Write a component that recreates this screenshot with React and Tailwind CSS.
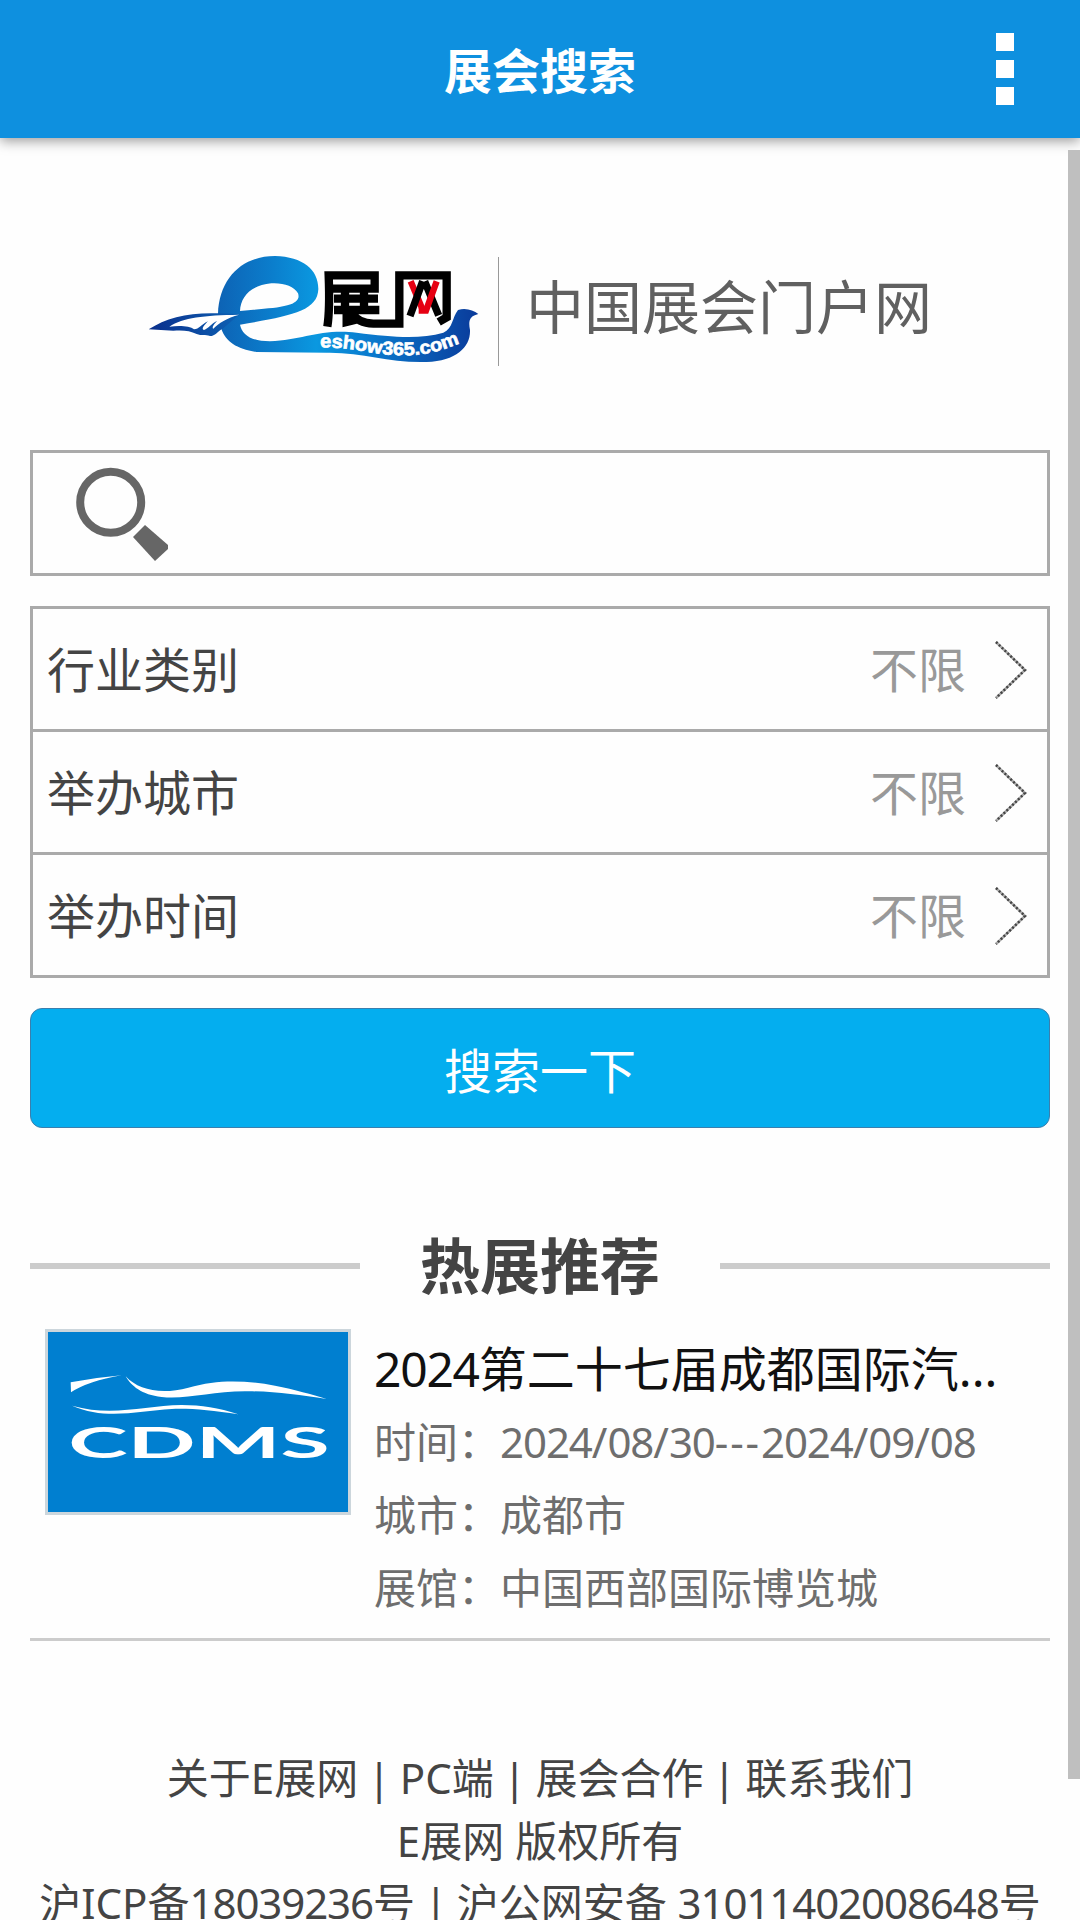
import React from 'react';

const filters = [
    { label: '行业类别', value: '不限' },
    { label: '举办城市', value: '不限' },
    { label: '举办时间', value: '不限' },
];

const footerLines = [
    '关于E展网 | PC端 | 展会合作 | 联系我们',
    'E展网 版权所有',
    '沪ICP备18039236号 | 沪公网安备 31011402008648号',
];

// digits are set a little tighter than the font's own widths
function Mixed({ children }) {
    return children.split(/(\d+|\||-+)/).map((part, index) => {
        if (part === '|') return <span key={index} className="-mx-[0.04em]">|</span>;
        if (/^\d/.test(part)) return <span key={index} className="tracking-[-0.026em]">{part}</span>;
        if (/^-/.test(part)) return <span key={index} className="tracking-[0.045em]">{part}</span>;
        return part;
    });
}

function Logo() {
    return (
        <svg width="360" height="150" viewBox="0 0 1080 450" className="shrink-0">
            <defs>
                <linearGradient id="swan" gradientUnits="userSpaceOnUse" x1="260" y1="0" x2="1045" y2="0">
                    <stop offset="0" stopColor="#0d62b4" />
                    <stop offset="0.2" stopColor="#0b7ccb" />
                    <stop offset="0.38" stopColor="#0a98e0" />
                    <stop offset="0.6" stopColor="#0a78cc" />
                    <stop offset="1" stopColor="#0a3a9a" />
                </linearGradient>
                <linearGradient id="wing" x1="0" y1="0" x2="1" y2="0">
                    <stop offset="0" stopColor="#0a2f8c" />
                    <stop offset="1" stopColor="#0d62b4" />
                </linearGradient>
                <path id="wave" d="M570 352 C680 352 740 378 830 376 C900 374 950 357 1000 335" />
            </defs>
            <path
                fill="url(#swan)"
                fillRule="evenodd"
                d="M264 252 C268 140 340 78 435 78 C520 80 566 120 565 178 C562 245 480 258 330 284 C336 315 366 334 420 334 C520 330 570 296 680 308 C790 322 870 328 940 308 C970 294 966 262 984 240 C1006 232 1030 240 1045 252 C1020 258 1014 270 1020 300 C1022 350 980 392 890 396 C780 400 700 366 590 368 L380 366 C320 356 288 336 274 296 Z M330 243 C390 236 440 236 472 226 C500 218 510 206 504 190 C492 168 460 158 424 160 C362 166 332 200 330 243 Z"
            />
            <path fill="url(#wing)" d="M56 298 C110 262 180 246 270 250 L330 252 L278 296 C262 304 256 318 240 318 C226 312 214 318 200 312 C180 302 160 300 130 302 Z" />
            <path fill="#fff" d="M118 290 C160 262 220 256 328 254 C290 264 266 280 250 296 C244 292 254 280 262 272 C242 282 236 294 222 300 C212 298 224 284 234 274 C212 284 208 298 192 298 C180 288 150 286 118 290 Z" />
            <path fill="none" stroke="#000" strokeWidth="25" d="M592 290 Q600 240 596 136 H734 V176 H600 M612 206 H744 M612 240 H748 M645 182 V240 M702 182 V240 M650 240 V276 L690 266 M662 246 Q684 280 730 281 H808 V136 H950 V262 L926 276" />
            <g fill="none" strokeWidth="19">
                <path d="M842 154 L880 244" stroke="#e60012" />
                <path d="M840 258 L878 154 M884 154 L926 256" stroke="#000" strokeWidth="22" />
                <path d="M920 154 L888 242 H866" stroke="#e60012" />
            </g>
            <text fill="#fff" stroke="#fff" strokeWidth="2" fontSize="56" fontWeight="700" fontFamily="Liberation Sans, Arial, sans-serif">
                <textPath href="#wave" textLength="426" lengthAdjust="spacingAndGlyphs">eshow365.com</textPath>
            </text>
        </svg>
    );
}

function Arrow() {
    return (
        <svg width="34" height="60" viewBox="0 0 34 60" fill="none">
            <path d="M2 3 L31 31 L2 59" stroke="#aaa" strokeWidth="2.5" />
            <path d="M2 3 L31 31 L2 59" stroke="#444" strokeWidth="2.5" strokeDasharray="2 2" />
        </svg>
    );
}

function ShowCard() {
    return (
        <div className="flex h-[329px] border-b-[3px] border-[#ccc] pt-[17px] pl-[15px]">
            <svg width="306" height="186" viewBox="0 0 918 558" className="shrink-0">
                <rect width="918" height="558" fill="#ccd6dc" />
                <rect x="9" y="9" width="900" height="540" fill="#007fd0" />
                <g fill="#fff">
                    <path d="M77 160 Q150 146 230 139 Q130 156 78 190 Z" />
                    <path d="M242 142 C280 184 350 198 430 176 C520 150 600 154 690 170 C750 182 800 196 845 210 C760 198 690 186 600 187 C500 188 420 212 350 204 C290 198 258 170 242 142 Z" />
                    <path d="M81 230 C200 264 300 230 410 228 C470 228 520 236 580 256 C500 244 440 238 380 240 C280 246 180 274 81 230 Z" />
                </g>
                <text x="70" y="387" fill="#fff" fontSize="125" fontWeight="700" textLength="784" lengthAdjust="spacingAndGlyphs" fontFamily="Lato, sans-serif">CDMS</text>
            </svg>
            <div className="ml-[23px] w-[660px] text-[42px] leading-[73px] text-[#6e6e6e]">
                <h3 className="pt-[3px] text-[48px] leading-[73px] whitespace-nowrap text-[#111]"><Mixed>2024第二十七届成都国际汽...</Mixed></h3>
                <p><Mixed>时间：2024/08/30---2024/09/08</Mixed></p>
                <p>城市：成都市</p>
                <p>展馆：中国西部国际博览城</p>
            </div>
        </div>
    );
}

function App() {
    return (
        <div className="relative h-[1920px] w-[1080px] overflow-hidden bg-[#fefefe] font-['Noto_Sans','Noto_Sans_CJK_SC',sans-serif] text-[#444]">
            <header className="grid h-[138px] grid-cols-3 items-center bg-[#0e90df] shadow-[0_3px_12px_rgba(0,0,0,0.4)]">
                <h1 className="col-start-2 pt-[3px] text-center text-[48px] leading-[60px] font-bold text-white">展会搜索</h1>
                <div className="mr-[66px] flex flex-col gap-[9px] justify-self-end">
                    <i className="size-[18px] bg-white" />
                    <i className="size-[18px] bg-white" />
                    <i className="size-[18px] bg-white" />
                </div>
            </header>

            <main className="px-[30px]">
                <div className="flex h-[312px] items-start pt-[92px] pl-[100px]">
                    <Logo />
                    <div className="mt-[27px] ml-2 h-[109px] w-px bg-[#999]" />
                    <div className="mt-[41px] ml-[27px] text-[58px] leading-[72px] whitespace-nowrap text-[#606060]">中国展会门户网</div>
                </div>

                <div className="h-[126px] border-[3px] border-[#aaa] pt-3 pl-10">
                    <svg width="100" height="100" viewBox="0 0 100 100">
                        <circle cx="37.7" cy="37.3" r="30.5" fill="none" stroke="#666" strokeWidth="8" />
                        <path d="M72 60 L95 80 V84 L82 96 L60 72 Z" fill="#666" />
                    </svg>
                </div>

                <ul className="mt-[30px] border-[3px] border-b-0 border-[#aaa]">
                    {filters.map(item => (
                        <li key={item.label} className="flex h-[123px] items-center border-b-[3px] border-[#aaa] pr-[19px] pl-[14px] text-[48px] leading-[60px]">
                            <span className="flex-1 pt-[2px]">{item.label}</span>
                            <span className="mr-7 pt-[2px] text-[#999]">{item.value}</span>
                            <Arrow />
                        </li>
                    ))}
                </ul>

                <button className="mt-[30px] block h-[120px] w-full rounded-[12px] border border-[#3a7fae] bg-[#04aeef] pt-[6px] text-[48px] leading-[60px] text-white">搜索一下</button>

                <div className="mt-[92px] flex h-[92px] items-center">
                    <div className="h-[6px] flex-1 bg-[#ccc]" />
                    <h2 className="w-[360px] text-center text-[60px] leading-[80px] font-bold">热展推荐</h2>
                    <div className="h-[6px] flex-1 bg-[#ccc]" />
                </div>
                <ShowCard />
            </main>

            <footer className="mt-[106px] text-center text-[42px] leading-[62.5px] whitespace-nowrap">
                {footerLines.map(line => <p key={line}><Mixed>{line}</Mixed></p>)}
            </footer>

            {/* scrollbar thumb */}
            <div className="absolute top-[150px] right-0 h-[1629px] w-3 bg-[#bfbfbf]" />
        </div>
    );
}

export default App;
